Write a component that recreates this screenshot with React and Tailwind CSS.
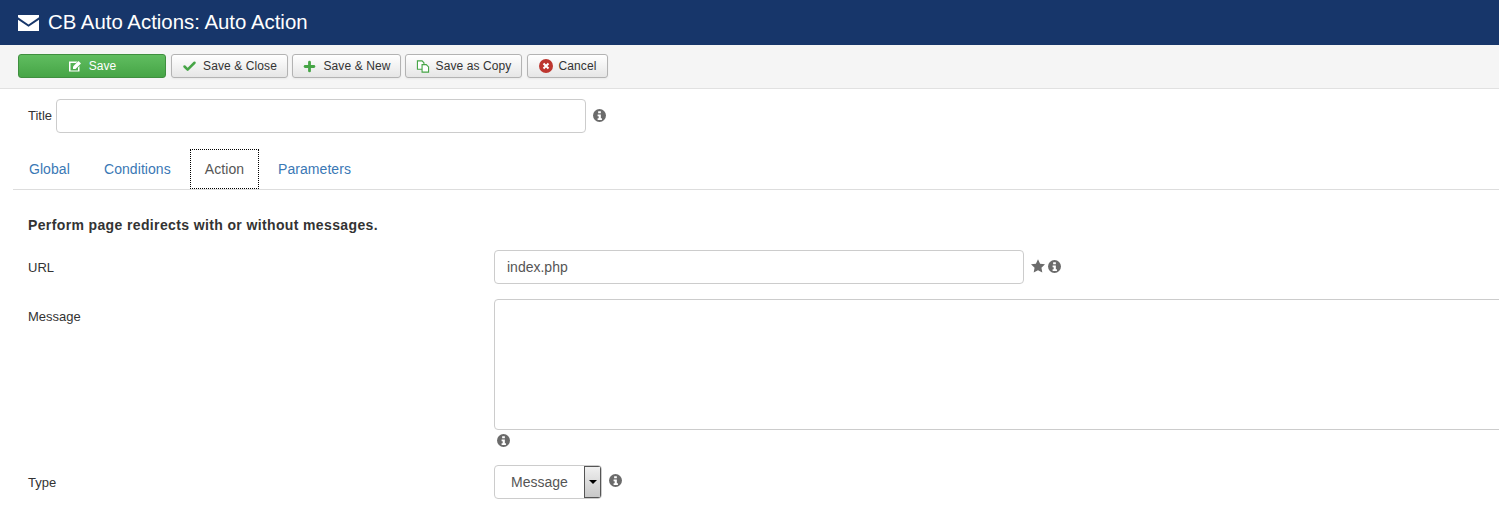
import React from 'react';
import { Check, Plus } from 'lucide-react';

const InfoIcon = ({ className = '' }) => (
  <svg viewBox="0 0 24 24" className={`h-[13px] w-[13px] shrink-0 ${className}`}>
    <circle cx="12" cy="12" r="12" fill="#6b6b6b" />
    <path d="M9.5 4h5v4h-5z M8.5 10h6v7h2v3.5h-8V17h2v-3.5h-2z" fill="#fff" />
  </svg>
);

const Btn = ({ width, icon, children }) => (
  <button className={`flex h-[24px] items-center justify-center gap-[6px] rounded-[3px] border border-[#b3b3b3] bg-gradient-to-b from-white to-[#e6e6e6] text-[12px] tracking-[0.1px] text-[#333] shadow-[0_1px_2px_rgba(0,0,0,0.05)] ${width}`}>
    {icon}
    <span>{children}</span>
  </button>
);

const FormRow = ({ label, className = '', children }) => (
  <div className={`flex ${className}`}>
    <label className="w-[466px] shrink-0 text-[13px] leading-[18px] text-[#333]">{label}</label>
    {children}
  </div>
);

const App = () => {
  return (
    <div className="h-[508px] w-[1499px] overflow-hidden bg-white font-['Liberation_Sans',Arial,sans-serif] text-[#333]">
      <header className="flex h-[45px] items-center gap-[9px] bg-[#17366a] pl-[18px] text-white">
        <svg viewBox="0 0 21 16" className="h-[16px] w-[21px]">
          <path d="M0 0h21v2.2L10.5 9.5 0 2.2z M0 4.8l10.5 7L21 4.8V16H0z" fill="#fff" />
        </svg>
        <h1 className="text-[20.4px] leading-none">CB Auto Actions: Auto Action</h1>
      </header>

      <div className="flex h-[44px] items-start gap-[4px] border-b border-[#e1e1e1] bg-[#f5f5f5] pl-[18px] pt-[9px]">
        <button className="mr-px flex h-[24px] w-[148px] items-center justify-center gap-[5px] rounded-[3px] border border-[#3f8f3f] bg-gradient-to-b from-[#60bd60] to-[#46a546] text-[12px] text-white">
          <svg viewBox="0 0 14 13" className="h-[13px] w-[14px]">
            <path d="M2 1.5h7.5L8 3H2.5v7.5h7.5V7.5L11.5 6v5.5H1V1.5z" fill="#fff" />
            <path d="M5 6.5 10.5 1 13 3.5 7.5 9H5z" fill="#fff" />
          </svg>
          <span className="ml-[2px]">Save</span>
        </button>
        <Btn width="w-[117px]" icon={<Check className="h-[15px] w-[15px] text-[#46a546]" strokeWidth={4} />}>
          Save &amp; Close
        </Btn>
        <Btn width="w-[109px]" icon={<Plus className="h-[15px] w-[15px] text-[#46a546]" strokeWidth={4.5} />}>
          Save &amp; New
        </Btn>
        <Btn
          width="w-[117px] mr-px"
          icon={
            <svg viewBox="0 0 14 14" className="h-[13px] w-[14px]" fill="#fff" stroke="#46a546" strokeWidth="1.2">
              <path d="M1 1h5l2 2v7H1z" />
              <path d="M6 5h4.5L13 7.5V13H6z" />
            </svg>
          }
        >
          Save as Copy
        </Btn>
        <Btn
          width="w-[81px]"
          icon={
            <svg viewBox="0 0 14 14" className="h-[14px] w-[14px]">
              <circle cx="7" cy="7" r="7" fill="#bd362f" />
              <path d="m4.5 4.5 5 5m0-5-5 5" stroke="#fff" strokeWidth="2" />
            </svg>
          }
        >
          Cancel
        </Btn>
      </div>

      <div className="flex items-center pl-[28px] pt-[10px]">
        <label className="w-[28px] text-[13px] leading-[18px]">Title</label>
        <input className="h-[34px] w-[530px] rounded-[4px] border border-[#ccc] bg-white" />
        <InfoIcon className="ml-[7px] -translate-y-[1px]" />
      </div>

      <nav className="mt-[16px] ml-[13px] flex h-[41px] border-b border-[#ddd] text-[14px] tracking-[0.06px] text-[#3a78b5]">
        <a className="flex h-[40px] w-[91px] items-center pl-[16px]">Global</a>
        <a className="flex h-[40px] w-[86px] items-center">Conditions</a>
        <a className="flex h-[40px] w-[69px] items-center justify-center border border-dotted border-black text-[#555]">Action</a>
        <a className="flex h-[40px] items-center pl-[19px]">Parameters</a>
      </nav>

      <div className="pl-[28px]">
        <p className="mt-[27px] text-[14px] font-bold leading-[16px] tracking-[0.37px] text-[#333]">Perform page redirects with or without messages.</p>

        <FormRow label={<span className="relative top-[9px]">URL</span>} className="mt-[17px]">
          <input
            defaultValue="index.php"
            className="h-[34px] w-[530px] rounded-[4px] border border-[#ccc] bg-white px-[12px] text-[14px] text-[#555]"
          />
          <div className="ml-[7px] flex h-[32px] items-center gap-[3px]">
            <svg viewBox="0 0 24 24" className="h-[14px] w-[14px]">
              <path d="M12 .5l3.6 7.6 8.4 1.1-6.1 5.8 1.5 8.3L12 19.3l-7.4 4 1.5-8.3L0 9.2l8.4-1.1z" fill="#6b6b6b" />
            </svg>
            <InfoIcon />
          </div>
        </FormRow>

        <FormRow label={<span className="relative top-[9px]">Message</span>} className="mt-[15px]">
          <div className="w-[1100px] shrink-0">
            <div className="h-[131px] w-full rounded-[4px] border border-[#ccc] bg-white" />
            <InfoIcon className="mt-[4px] ml-[3px]" />
          </div>
        </FormRow>

        <FormRow label={<span className="relative top-[9px]">Type</span>} className="mt-[18px]">
          <div className="flex h-[34px] w-[108px] overflow-hidden rounded-[4px] border border-[#ccc] bg-white">
            <span className="flex flex-1 items-center pl-[16px] text-[14px] text-[#555]">Message</span>
            <span className="flex w-[17px] items-center justify-center border border-[#555] bg-gradient-to-b from-[#f0f0f0] to-[#c8c8c8]">
              <span className="h-0 w-0 border-x-[4px] border-t-[4px] border-x-transparent border-t-black" />
            </span>
          </div>
          <InfoIcon className="ml-[7px] mt-[9px]" />
        </FormRow>
      </div>
    </div>
  );
};

export default App;
